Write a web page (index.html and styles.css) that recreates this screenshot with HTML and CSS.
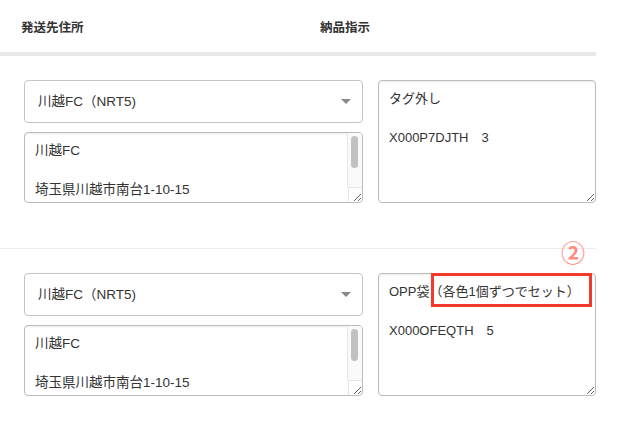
FILE: index.html
```html
<!DOCTYPE html>
<html lang="ja">
<head>
<meta charset="utf-8">
<title>納品指示</title>
<link rel="stylesheet" href="styles.css">
</head>
<body>
<div class="table">
  <div class="head">
    <div class="th th-addr">発送先住所</div>
    <div class="th th-note">納品指示</div>
  </div>
  <div class="row">
    <div class="addr">
      <div class="select-wrap">
        <select class="select"><option>川越FC（NRT5)</option></select>
      </div>
      <div class="addr-box">
        <textarea class="field addr-text">川越FC

埼玉県川越市南台1-10-15

350-1165</textarea>
        <span class="sb-track"><span class="sb-thumb"></span></span>
        <span class="sb-corner"></span>
      </div>
    </div>
    <div class="note">
      <textarea class="field note-text">タグ外し

X000P7DJTH　3</textarea>
    </div>
  </div>
  <div class="row">
    <div class="addr">
      <div class="select-wrap">
        <select class="select"><option>川越FC（NRT5)</option></select>
      </div>
      <div class="addr-box">
        <textarea class="field addr-text">川越FC

埼玉県川越市南台1-10-15

350-1165</textarea>
        <span class="sb-track"><span class="sb-thumb"></span></span>
        <span class="sb-corner"></span>
      </div>
    </div>
    <div class="note">
      <textarea class="field note-text">OPP袋（各色1個ずつでセット）

X000OFEQTH　5</textarea>
      <span class="mark-num">②</span>
      <span class="mark-box"></span>
    </div>
  </div>
</div>
</body>
</html>
```

FILE: styles.css
```css
html, body {
  margin: 0;
  padding: 0;
  background: #ffffff;
}

body {
  font-family: "Liberation Sans", "Noto Sans CJK JP", sans-serif;
  color: #333333;
}

.table {
  width: 596px;
}

.head {
  display: flex;
  align-items: center;
  height: 52px;
  border-bottom: 4px solid #e9e9e9;
}

.th {
  font-size: 12.5px;
  font-weight: bold;
  color: #333333;
}

.th-addr {
  width: 299px;
  padding-left: 21px;
}

.row {
  display: grid;
  grid-template-columns: 339px 218px;
  column-gap: 15px;
  padding: 24px 0 45px 24px;
  border-bottom: 1px solid #ececec;
}

.addr {
  display: flex;
  flex-direction: column;
  gap: 9px;
}

.select-wrap {
  position: relative;
}

.select-wrap::after {
  content: "";
  position: absolute;
  right: 12px;
  top: 19px;
  border-left: 5px solid transparent;
  border-right: 5px solid transparent;
  border-top: 5px solid #888888;
  pointer-events: none;
}

.select {
  display: block;
  width: 100%;
  height: 43px;
  box-sizing: border-box;
  margin: 0;
  padding: 0 30px 0 13px;
  border: 1px solid #c4c4c4;
  border-radius: 4px;
  background: #ffffff;
  color: #333333;
  font-family: "Liberation Sans", "Noto Sans CJK JP", sans-serif;
  font-size: 13.5px;
  -webkit-appearance: none;
  appearance: none;
}

.field {
  display: block;
  width: 100%;
  box-sizing: border-box;
  margin: 0;
  padding: 8px 10px;
  border: 1px solid #bcbcbc;
  border-radius: 4px;
  box-shadow: inset 0 1px 2px rgba(0, 0, 0, 0.08);
  background: #ffffff;
  color: #333333;
  font-family: "Liberation Sans", "Noto Sans CJK JP", sans-serif;
  font-size: 13.5px;
  line-height: 19.5px;
  resize: both;
}

.addr-box {
  position: relative;
}

.addr-text {
  height: 71px;
  overflow: hidden;
  padding-right: 26px;
}

.sb-track {
  position: absolute;
  top: 1px;
  right: 1px;
  bottom: 16px;
  width: 14px;
  background: #fafafa;
  border-left: 1px solid #e6e6e6;
  border-top-right-radius: 3px;
}

.sb-thumb {
  position: absolute;
  top: 3px;
  left: 3px;
  width: 7px;
  height: 32px;
  border-radius: 4px;
  background: #c1c1c1;
}

.sb-corner {
  position: absolute;
  right: 1px;
  bottom: 1px;
  width: 14px;
  height: 15px;
  border-left: 1px solid #e6e6e6;
  border-top: 1px solid #e6e6e6;
  box-sizing: border-box;
  pointer-events: none;
}

.note {
  position: relative;
}

.note-text {
  height: 123px;
  font-size: 13px;
  padding-right: 6px;
}

.mark-box {
  position: absolute;
  left: 53px;
  top: 0;
  width: 161px;
  height: 34px;
  box-sizing: border-box;
  border: 3px solid #f2392c;
}

.mark-num {
  position: absolute;
  left: 183px;
  top: -35px;
  font-family: "Noto Sans CJK JP", sans-serif;
  font-weight: bold;
  font-size: 24px;
  line-height: 28px;
  color: #ff8a80;
}
```
